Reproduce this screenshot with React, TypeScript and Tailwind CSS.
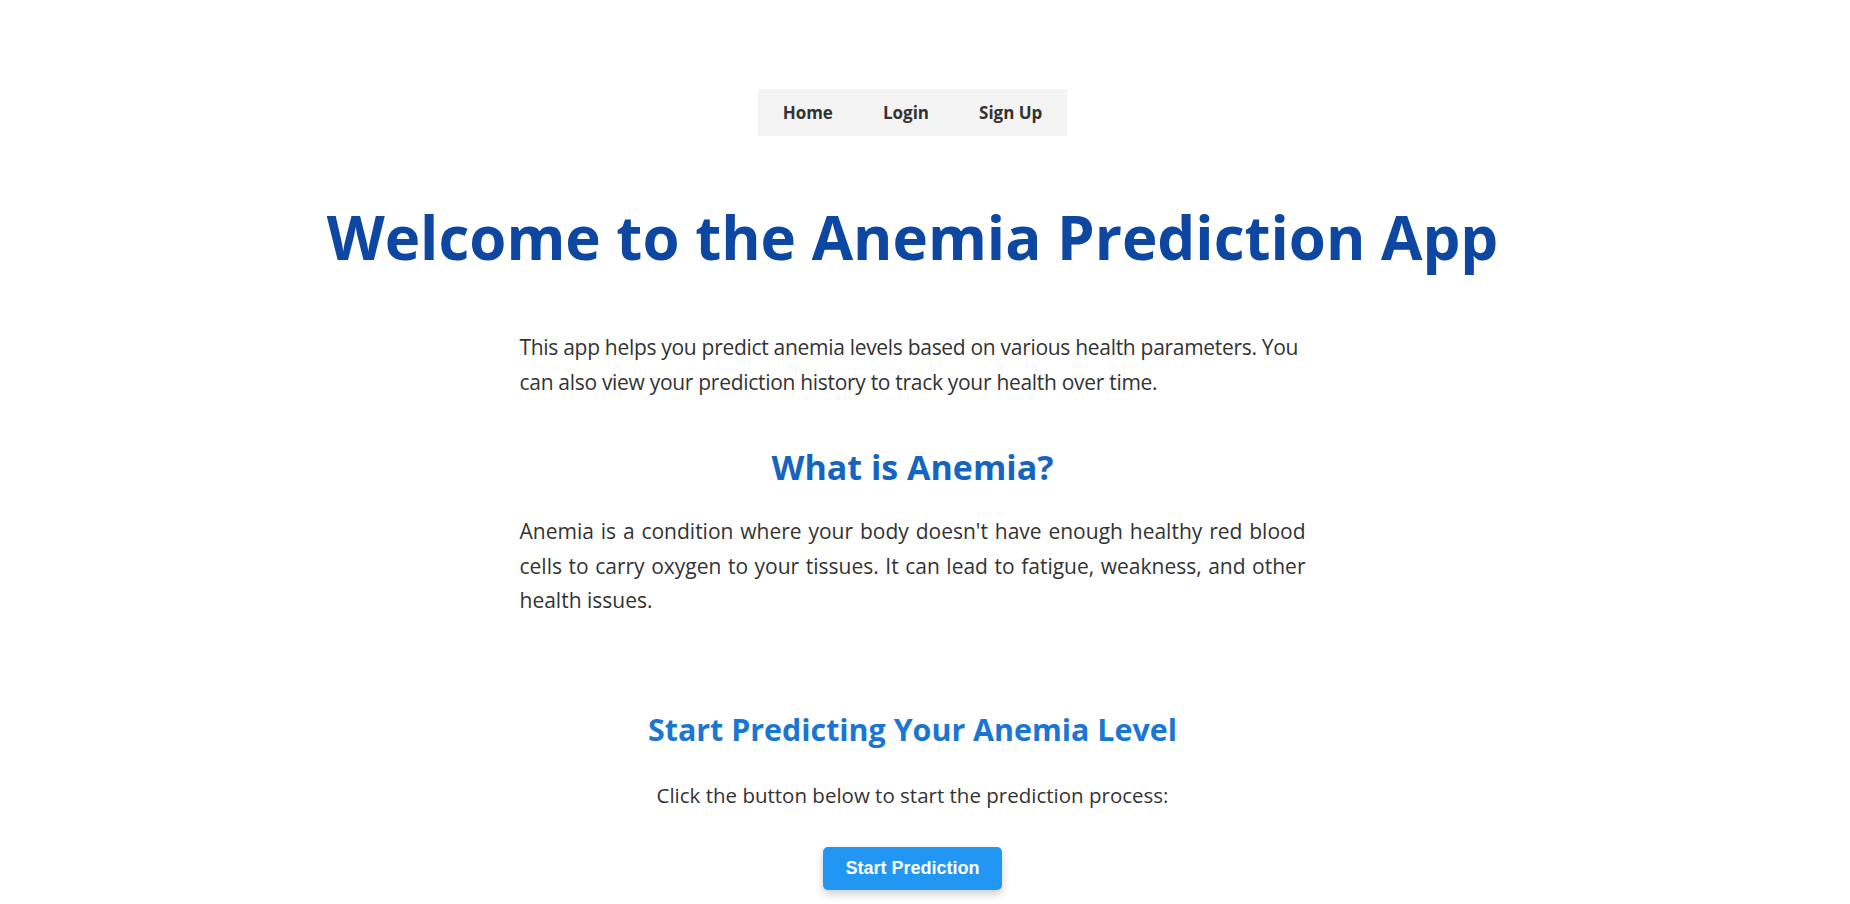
import React from "react";

// Simple landing page for the anemia prediction app
const navLinks = ["Home", "Login", "Sign Up"];

function NavBar() {
  return (
    <nav className="mx-auto flex w-fit bg-[#f4f4f4]">
      {navLinks.map((label) => (
        <a
          key={label}
          href="#"
          className="flex h-[47px] items-center px-[25px] text-[17px] font-bold text-[#333]"
        >
          {label}
        </a>
      ))}
    </nav>
  );
}

export default function App() {
  return (
    <div className="min-h-screen bg-white pr-[25px] pt-[89px] font-['Open_Sans',sans-serif] text-[#333]">
      <NavBar />

      <main className="flex flex-col items-center">
        <h1 className="mt-[71px] text-[60px] font-bold leading-none text-[#0d47a1]">
          Welcome to the Anemia Prediction App
        </h1>

        <div className="mt-[63px] w-[786px]">
          <p className="text-[21px] leading-[34.5px] tracking-[-0.3px]">
            This app helps you predict anemia levels based on various health
            parameters. You can also view your prediction history to track your
            health over time.
          </p>

          <h2 className="mt-[51px] text-center text-[34px] font-bold leading-none text-[#1565c0]">
            What is Anemia?
          </h2>

          <p className="mt-[30px] text-justify text-[21px] leading-[34.5px]">
            Anemia is a condition where your body doesn't have enough healthy
            red blood cells to carry oxygen to your tissues. It can lead to
            fatigue, weakness, and other health issues.
          </p>
        </div>

        <section className="mt-[97px] flex flex-col items-center">
          <h2 className="text-[30.4px] font-bold leading-none text-[#1976d2]">
            Start Predicting Your Anemia Level
          </h2>
          <p className="mt-[33px] text-[20.5px] leading-[34.5px]">
            Click the button below to start the prediction process:
          </p>
          <button className="mt-[35px] h-[43px] rounded-[5px] bg-[#2196f3] px-[22px] font-['Liberation_Sans',Arial,sans-serif] text-[18px] font-bold text-white shadow-[0_4px_8px_rgba(0,0,0,0.2)]">
            Start Prediction
          </button>
        </section>
      </main>
    </div>
  );
}
